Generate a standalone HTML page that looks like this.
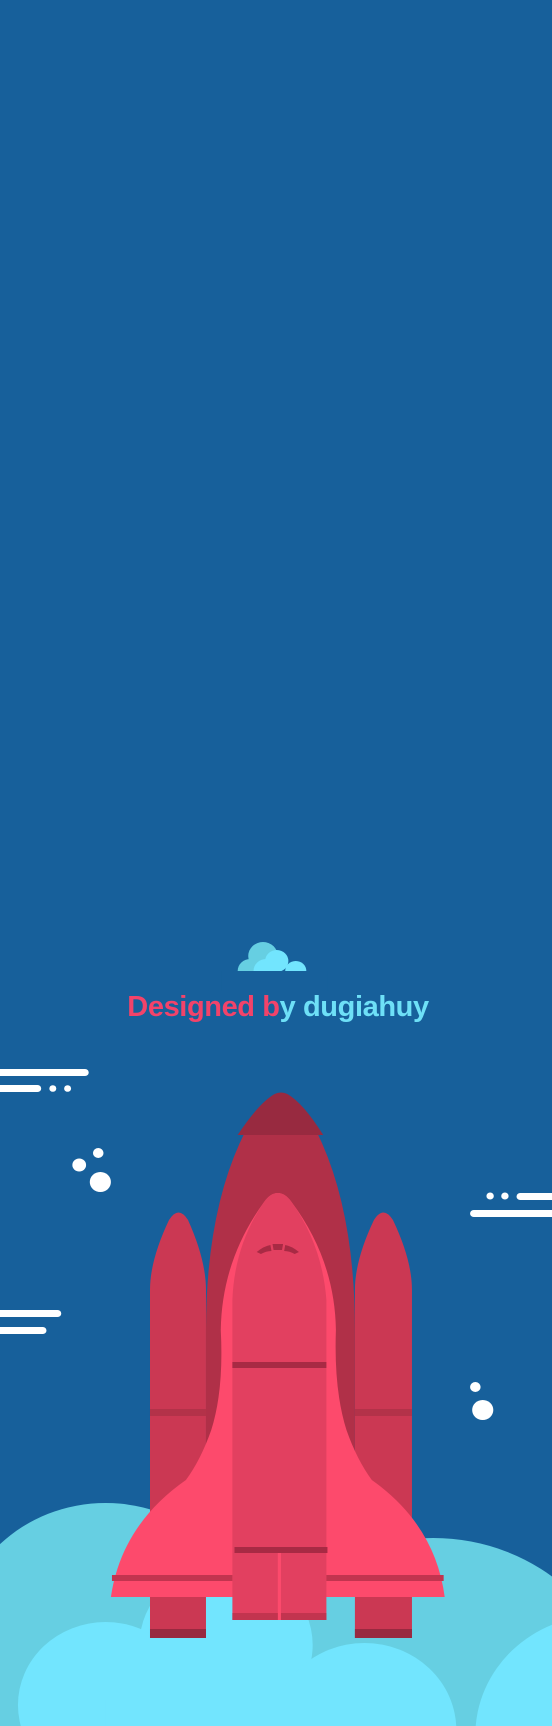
<!DOCTYPE html>
<html><head><meta charset="utf-8"><style>
html,body{margin:0;padding:0;background:#17609b;}
body{width:552px;height:1726px;overflow:hidden;position:relative;}
svg{position:absolute;left:0;top:0;}
.t{position:absolute;left:2px;top:991px;width:552px;text-align:center;font-family:"Liberation Sans",sans-serif;font-weight:bold;font-size:29px;letter-spacing:-0.4px;white-space:nowrap;}
</style></head><body>
<svg width="552" height="1726" viewBox="0 0 552 1726">
<rect width="552" height="1726" fill="#17609b"/>
<g transform="scale(1.0563,1)">
<!-- small cloud -->
<circle cx="249" cy="956" r="14" fill="#66cfe2"/>
<circle cx="237" cy="971" r="12" fill="#66cfe2"/>
<circle cx="262" cy="961" r="11" fill="#72e5fe"/>
<circle cx="280" cy="971" r="10" fill="#72e5fe"/>
<circle cx="252" cy="971" r="12" fill="#72e5fe"/>
<rect x="210" y="971" width="100" height="20" fill="#17609b"/>
<!-- speed lines -->
<g fill="#fff">
<rect x="-5" y="1069" width="89" height="7" rx="3.5"/>
<rect x="-5" y="1085" width="44" height="7" rx="3.5"/>
<circle cx="50" cy="1088.5" r="3.3"/><circle cx="64" cy="1088.5" r="3.3"/>
<circle cx="75" cy="1165" r="6.5"/><circle cx="93" cy="1153" r="5"/><circle cx="95" cy="1182" r="10"/>
<circle cx="464" cy="1196" r="3.5"/><circle cx="478" cy="1196" r="3.5"/>
<rect x="489" y="1193" width="70" height="7" rx="3.5"/>
<rect x="445" y="1210" width="115" height="7" rx="3.5"/>
<rect x="-5" y="1310" width="63" height="7" rx="3.5"/>
<rect x="-5" y="1327" width="49" height="7" rx="3.5"/>
<circle cx="450" cy="1387" r="5"/><circle cx="457" cy="1410" r="10"/>
</g>
<!-- back clouds -->
<circle cx="100" cy="1645" r="142" fill="#66cfe2"/>
<circle cx="410" cy="1722" r="184" fill="#66cfe2"/>
<!-- front clouds -->
<g fill="#72e5fe">
<circle cx="214" cy="1645" r="82"/>
<circle cx="100" cy="1705" r="83"/>
<circle cx="345" cy="1730" r="87"/>
<circle cx="570" cy="1735" r="120"/>
<rect x="100" y="1700" width="270" height="30"/>
</g>
<!-- boosters -->
<path d="M142 1290 Q142 1260 160 1220 Q169 1205 178 1220 Q195 1260 195 1290 L195 1638 L142 1638 Z" fill="#cb3853"/>
<path d="M336 1290 Q336 1260 354 1220 Q363 1205 372 1220 Q390 1260 390 1290 L390 1638 L336 1638 Z" fill="#cb3853"/>
<rect x="142" y="1409" width="53" height="7" fill="#b33249"/>
<rect x="336" y="1409" width="54" height="7" fill="#b33249"/>
<rect x="142" y="1629" width="53" height="9" fill="#982a40"/>
<rect x="336" y="1629" width="54" height="9" fill="#982a40"/>
<!-- main tank -->
<path d="M195 1330 Q195 1200 238 1120 Q255 1096 266 1093 Q277 1096 294 1120 Q336 1200 336 1330 L336 1560 L195 1560 Z" fill="#b03048"/>
<path d="M225 1135 Q245 1103 260 1094 Q266 1091 272 1094 Q287 1103 306 1135 Z" fill="#982a40"/>
<!-- orbiter -->
<path d="M263 1193 Q256 1193 250 1202 Q210 1260 209 1330 Q212 1390 200 1430 Q190 1460 176 1480 Q115 1525 105 1597 L421 1597 Q412 1525 352 1480 Q338 1460 328 1430 Q316 1390 318 1330 Q317 1260 276 1202 Q270 1193 263 1193 Z" fill="#fd4a6c"/>
<path d="M263 1193 Q256 1193 250 1202 Q222 1245 220 1300 L220 1620 L309 1620 L309 1300 Q305 1245 276 1202 Q270 1193 263 1193 Z" fill="#e24060"/>
<rect x="220" y="1362" width="89" height="6" fill="#a82a44"/>
<rect x="106" y="1575" width="114" height="6" fill="#c2344f"/>
<rect x="309" y="1575" width="111" height="6" fill="#c2344f"/>
<rect x="222" y="1547" width="88" height="6" fill="#a82a44"/>
<rect x="263" y="1553" width="3" height="67" fill="#fd4a6c"/>
<rect x="220" y="1613" width="43" height="7" fill="#c2344f"/>
<rect x="266" y="1613" width="43" height="7" fill="#c2344f"/>
<path d="M243 1252 Q250 1246 256 1245 L257 1251 Q252 1251 247 1254 Z M258 1244 L268 1244 L267 1250 L259 1250 Z M270 1245 Q276 1246 283 1252 L279 1254 Q274 1251 269 1251 Z" fill="#a82a44"/>
</g>
</svg>
<div class="t"><span style="color:#f2436a">Designed b</span><span style="color:#6ee0f7">y dugiahuy</span></div>
</body></html>
